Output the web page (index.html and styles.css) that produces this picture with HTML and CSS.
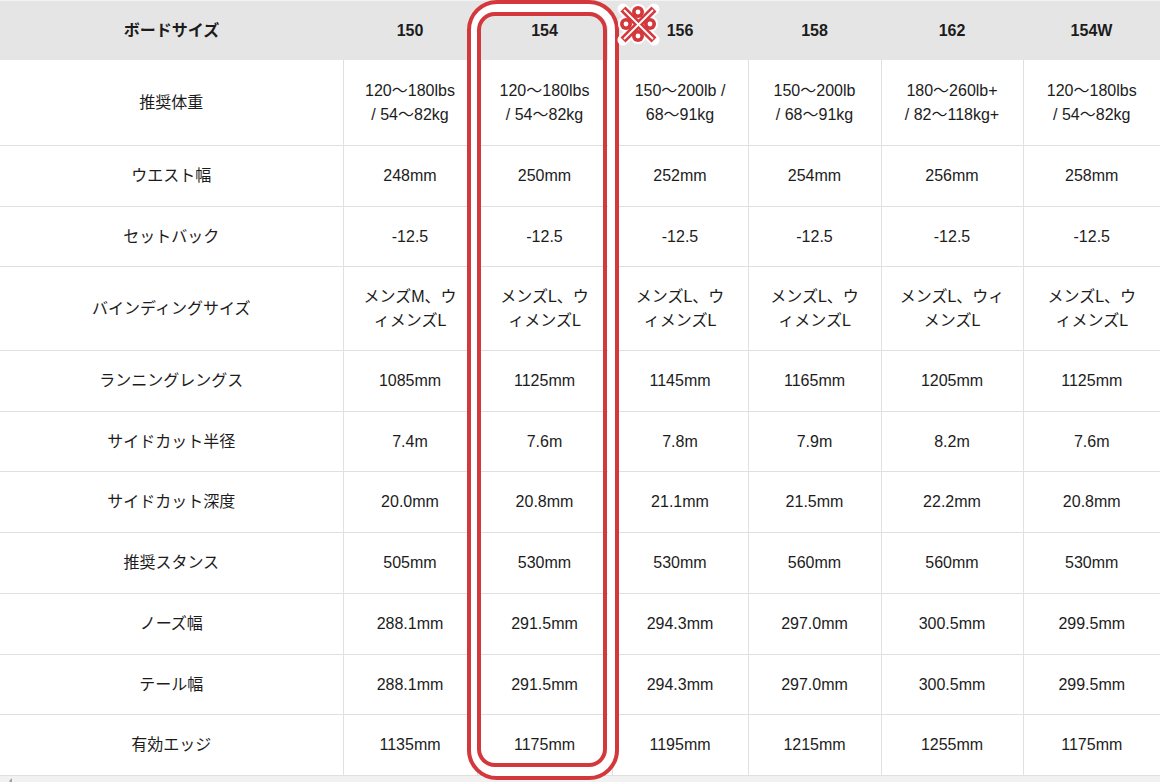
FILE: index.html
```html
<!DOCTYPE html>
<html lang="ja">
<head>
<meta charset="utf-8">
<title>ボードサイズ</title>
<link rel="stylesheet" href="styles.css">
</head>
<body>
<div class="wrap">
  <table class="spec">
    <colgroup>
      <col class="c-label">
      <col class="c-150">
      <col class="c-154">
      <col class="c-156">
      <col class="c-158">
      <col class="c-162">
      <col class="c-154w">
    </colgroup>
    <thead>
      <tr><th>ボードサイズ</th><th>150</th><th>154</th><th>156</th><th>158</th><th>162</th><th>154W</th></tr>
    </thead>
    <tbody>
      <tr class="tall"><td>推奨体重</td><td>120～180lbs<br>/ 54～82kg</td><td>120～180lbs<br>/ 54～82kg</td><td>150～200lb /<br>68～91kg</td><td>150～200lb<br>/ 68～91kg</td><td>180～260lb+<br>/ 82～118kg+</td><td>120～180lbs<br>/ 54～82kg</td></tr>
      <tr><td>ウエスト幅</td><td>248mm</td><td>250mm</td><td>252mm</td><td>254mm</td><td>256mm</td><td>258mm</td></tr>
      <tr class="short"><td>セットバック</td><td>-12.5</td><td>-12.5</td><td>-12.5</td><td>-12.5</td><td>-12.5</td><td>-12.5</td></tr>
      <tr class="tall-b"><td>バインディングサイズ</td><td>メンズM、ウ<br>ィメンズL</td><td>メンズL、ウ<br>ィメンズL</td><td>メンズL、ウ<br>ィメンズL</td><td>メンズL、ウ<br>ィメンズL</td><td>メンズL、ウィ<br>メンズL</td><td>メンズL、ウ<br>ィメンズL</td></tr>
      <tr><td>ランニングレングス</td><td>1085mm</td><td>1125mm</td><td>1145mm</td><td>1165mm</td><td>1205mm</td><td>1125mm</td></tr>
      <tr class="short"><td>サイドカット半径</td><td>7.4m</td><td>7.6m</td><td>7.8m</td><td>7.9m</td><td>8.2m</td><td>7.6m</td></tr>
      <tr><td>サイドカット深度</td><td>20.0mm</td><td>20.8mm</td><td>21.1mm</td><td>21.5mm</td><td>22.2mm</td><td>20.8mm</td></tr>
      <tr><td>推奨スタンス</td><td>505mm</td><td>530mm</td><td>530mm</td><td>560mm</td><td>560mm</td><td>530mm</td></tr>
      <tr><td>ノーズ幅</td><td>288.1mm</td><td>291.5mm</td><td>294.3mm</td><td>297.0mm</td><td>300.5mm</td><td>299.5mm</td></tr>
      <tr class="short"><td>テール幅</td><td>288.1mm</td><td>291.5mm</td><td>294.3mm</td><td>297.0mm</td><td>300.5mm</td><td>299.5mm</td></tr>
      <tr><td>有効エッジ</td><td>1135mm</td><td>1175mm</td><td>1195mm</td><td>1215mm</td><td>1255mm</td><td>1175mm</td></tr>
    </tbody>
  </table>
  <div class="scrollbar"><span class="scroll-arrow"></span></div>

  <svg class="markup" width="1160" height="782" viewBox="0 0 1160 782" aria-hidden="true">
    <rect x="474" y="8" width="138" height="764" rx="22" ry="22" fill="none" stroke="#ffffff" stroke-width="8"/>
    <rect x="469" y="2" width="148" height="776" rx="28" ry="28" fill="none" stroke="#d3383d" stroke-width="4"/>
    <rect x="479" y="14" width="126" height="751" rx="16" ry="16" fill="none" stroke="#d3383d" stroke-width="4"/>
    <g transform="translate(638 24)">
      <g stroke="#ffffff" stroke-width="11" stroke-linecap="round">
        <line x1="-15" y1="-15" x2="16" y2="16"/>
        <line x1="16" y1="-15" x2="-15" y2="16"/>
      </g>
      <g fill="#ffffff">
        <circle cx="0" cy="-12" r="8"/>
        <circle cx="0" cy="12" r="8"/>
        <circle cx="-12" cy="0" r="8"/>
        <circle cx="12" cy="0" r="8"/>
      </g>
      <g stroke="#d3383d" stroke-width="7" stroke-linecap="butt">
        <line x1="-15" y1="-15" x2="16" y2="16"/>
        <line x1="16" y1="-15" x2="-15" y2="16"/>
      </g>
      <g stroke="#ffffff" stroke-width="1.8">
        <line x1="-14" y1="-14" x2="15" y2="15"/>
        <line x1="15" y1="-14" x2="-14" y2="15"/>
      </g>
      <g fill="#d3383d">
        <circle cx="0" cy="-12" r="6"/>
        <circle cx="0" cy="12" r="6"/>
        <circle cx="-12" cy="0" r="6"/>
        <circle cx="12" cy="0" r="6"/>
      </g>
      <g fill="#ffffff">
        <circle cx="0" cy="-12" r="2.4"/>
        <circle cx="0" cy="12" r="2.4"/>
        <circle cx="-12" cy="0" r="2.4"/>
        <circle cx="12" cy="0" r="2.4"/>
      </g>
    </g>
  </svg>
</div>
</body>
</html>
```

FILE: styles.css
```css
html, body {
  margin: 0;
  padding: 0;
  background: #ffffff;
}

body {
  font-family: "Liberation Sans", "Noto Sans CJK JP", sans-serif;
  color: #1c1c1c;
  width: 1160px;
  height: 782px;
  overflow: hidden;
}

.wrap {
  position: relative;
  width: 1160px;
  height: 782px;
}

.spec {
  width: 1160px;
  border-collapse: collapse;
  table-layout: fixed;
  font-size: 16px;
  line-height: 24px;
}

.c-label { width: 343px; }
.c-150 { width: 134px; }
.c-154 { width: 135px; }
.c-156 { width: 136px; }
.c-158 { width: 133px; }
.c-162 { width: 142px; }
.c-154w { width: 137px; }

.spec thead th {
  background: #e5e5e5;
  font-weight: bold;
  height: 59px;
  padding: 0;
  text-align: center;
  vertical-align: middle;
  border-top: 1px solid #f3f3f3;
}

.spec tbody td {
  height: 60px;
  padding: 0;
  text-align: center;
  vertical-align: middle;
  border-bottom: 1px solid #e0e0e0;
  border-left: 1px solid #e0e0e0;
}

.spec tbody td:first-child {
  border-left: none;
}

.spec tbody tr.short td {
  height: 59px;
}

.spec tbody tr.tall td {
  height: 85px;
}

.spec tbody tr.tall-b td {
  height: 83px;
}

.scrollbar {
  position: relative;
  height: 8px;
  background: #f1f1f1;
}

.scroll-arrow {
  position: absolute;
  left: 9px;
  top: 2px;
  width: 0;
  height: 0;
  border-top: 3px solid transparent;
  border-bottom: 3px solid transparent;
  border-right: 3px solid #a3a3a3;
}

.markup {
  position: absolute;
  left: 0;
  top: 0;
  pointer-events: none;
}
```
